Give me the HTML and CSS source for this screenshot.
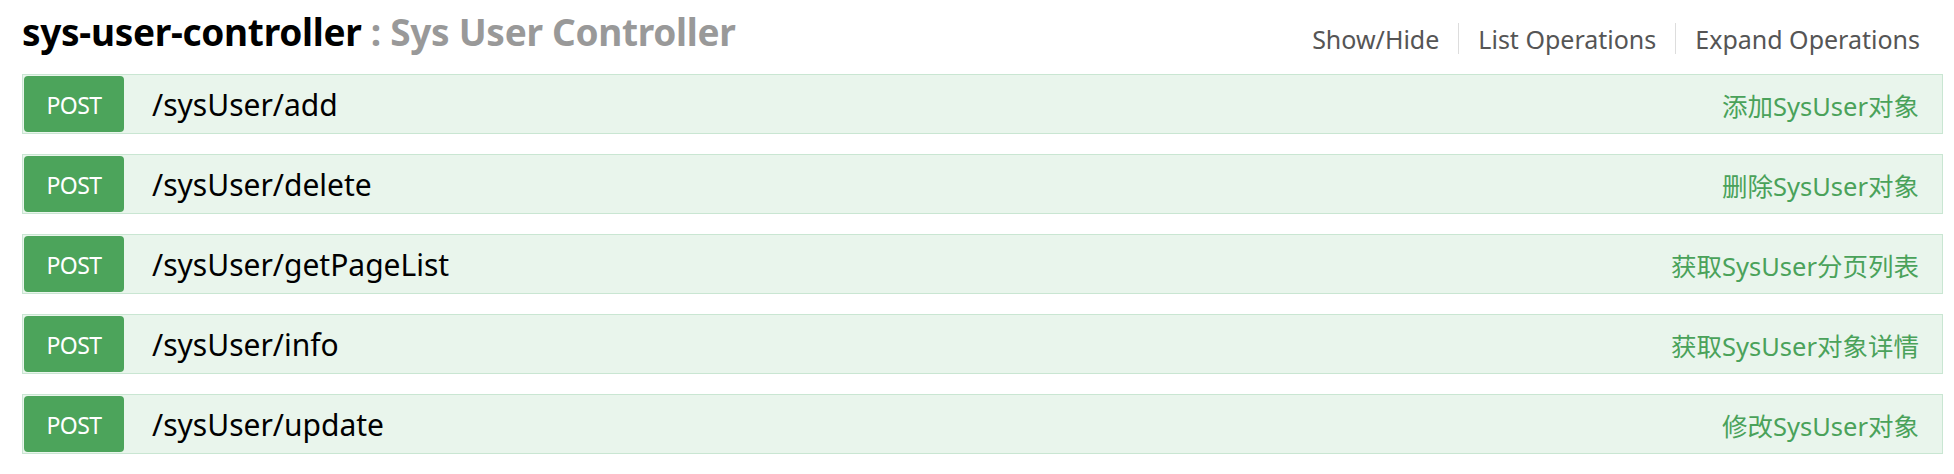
FILE: index.html
```html
<!DOCTYPE html>
<html lang="zh">
<head>
<meta charset="utf-8">
<title>sys-user-controller</title>
<link rel="stylesheet" href="styles.css">
</head>
<body>
<div class="resource">
  <div class="heading">
    <h2 class="title"><span class="name">sys-user-controller</span><span class="desc"> : Sys User Controller</span></h2>
    <ul class="options">
      <li><a>Show/Hide</a></li>
      <li><a>List Operations</a></li>
      <li><a>Expand Operations</a></li>
    </ul>
  </div>
  <ul class="endpoints">
    <li class="op"><span class="method">POST</span><span class="path">/sysUser/add</span><span class="summary">添加SysUser对象</span></li>
    <li class="op"><span class="method">POST</span><span class="path">/sysUser/delete</span><span class="summary">删除SysUser对象</span></li>
    <li class="op"><span class="method">POST</span><span class="path">/sysUser/getPageList</span><span class="summary">获取SysUser分页列表</span></li>
    <li class="op"><span class="method">POST</span><span class="path">/sysUser/info</span><span class="summary">获取SysUser对象详情</span></li>
    <li class="op"><span class="method">POST</span><span class="path">/sysUser/update</span><span class="summary">修改SysUser对象</span></li>
  </ul>
</div>
</body>
</html>
```
FILE: styles.css
```css
* { box-sizing: border-box; }
html, body { margin: 0; padding: 0; background: #fff; }
body {
  font-family: "Noto Sans", "Open Sans", "Noto Sans CJK SC", sans-serif;
  color: #000;
}
.resource {
  width: 1921px;
  margin-left: 22px;
}
.heading {
  display: flex;
  justify-content: space-between;
  align-items: flex-start;
  height: 74px;
}
.title {
  margin: 0;
  padding-top: 8px;
  font-size: 37px;
  font-weight: 700;
  line-height: 48px;
  letter-spacing: -0.3px;
}
.title .name { color: #000; }
.title .desc { color: #999; }
.options {
  list-style: none;
  margin: 0;
  padding: 0 23px 0 0;
  display: flex;
  margin-top: 23px;
}
.options li {
  height: 31px;
  display: flex;
  align-items: center;
  padding: 0 19px;
  border-left: 1px solid #ddd;
  font-size: 25px;
  color: #555;
}
.options li:first-child { border-left: none; }
.options li:last-child { padding-right: 0; }
.endpoints {
  list-style: none;
  margin: 0;
  padding: 0;
}
.op {
  display: flex;
  align-items: center;
  height: 60px;
  margin-bottom: 20px;
  padding: 1px;
  border: 1px solid #c9e6d2;
  background: #e9f5ec;
}
.method {
  width: 100px;
  height: 56px;
  flex: none;
  display: flex;
  align-items: center;
  justify-content: center;
  background: #4ca45b;
  color: #fff;
  border-radius: 4px;
  font-size: 23px;
  letter-spacing: -0.6px;
  padding-top: 2px;
}
.path {
  margin-left: 28px;
  font-size: 30px;
  color: #000;
  flex: 1;
  padding-top: 1px;
}
.summary {
  margin-right: 22px;
  font-size: 25.5px;
  color: #4aa25a;
}
```
